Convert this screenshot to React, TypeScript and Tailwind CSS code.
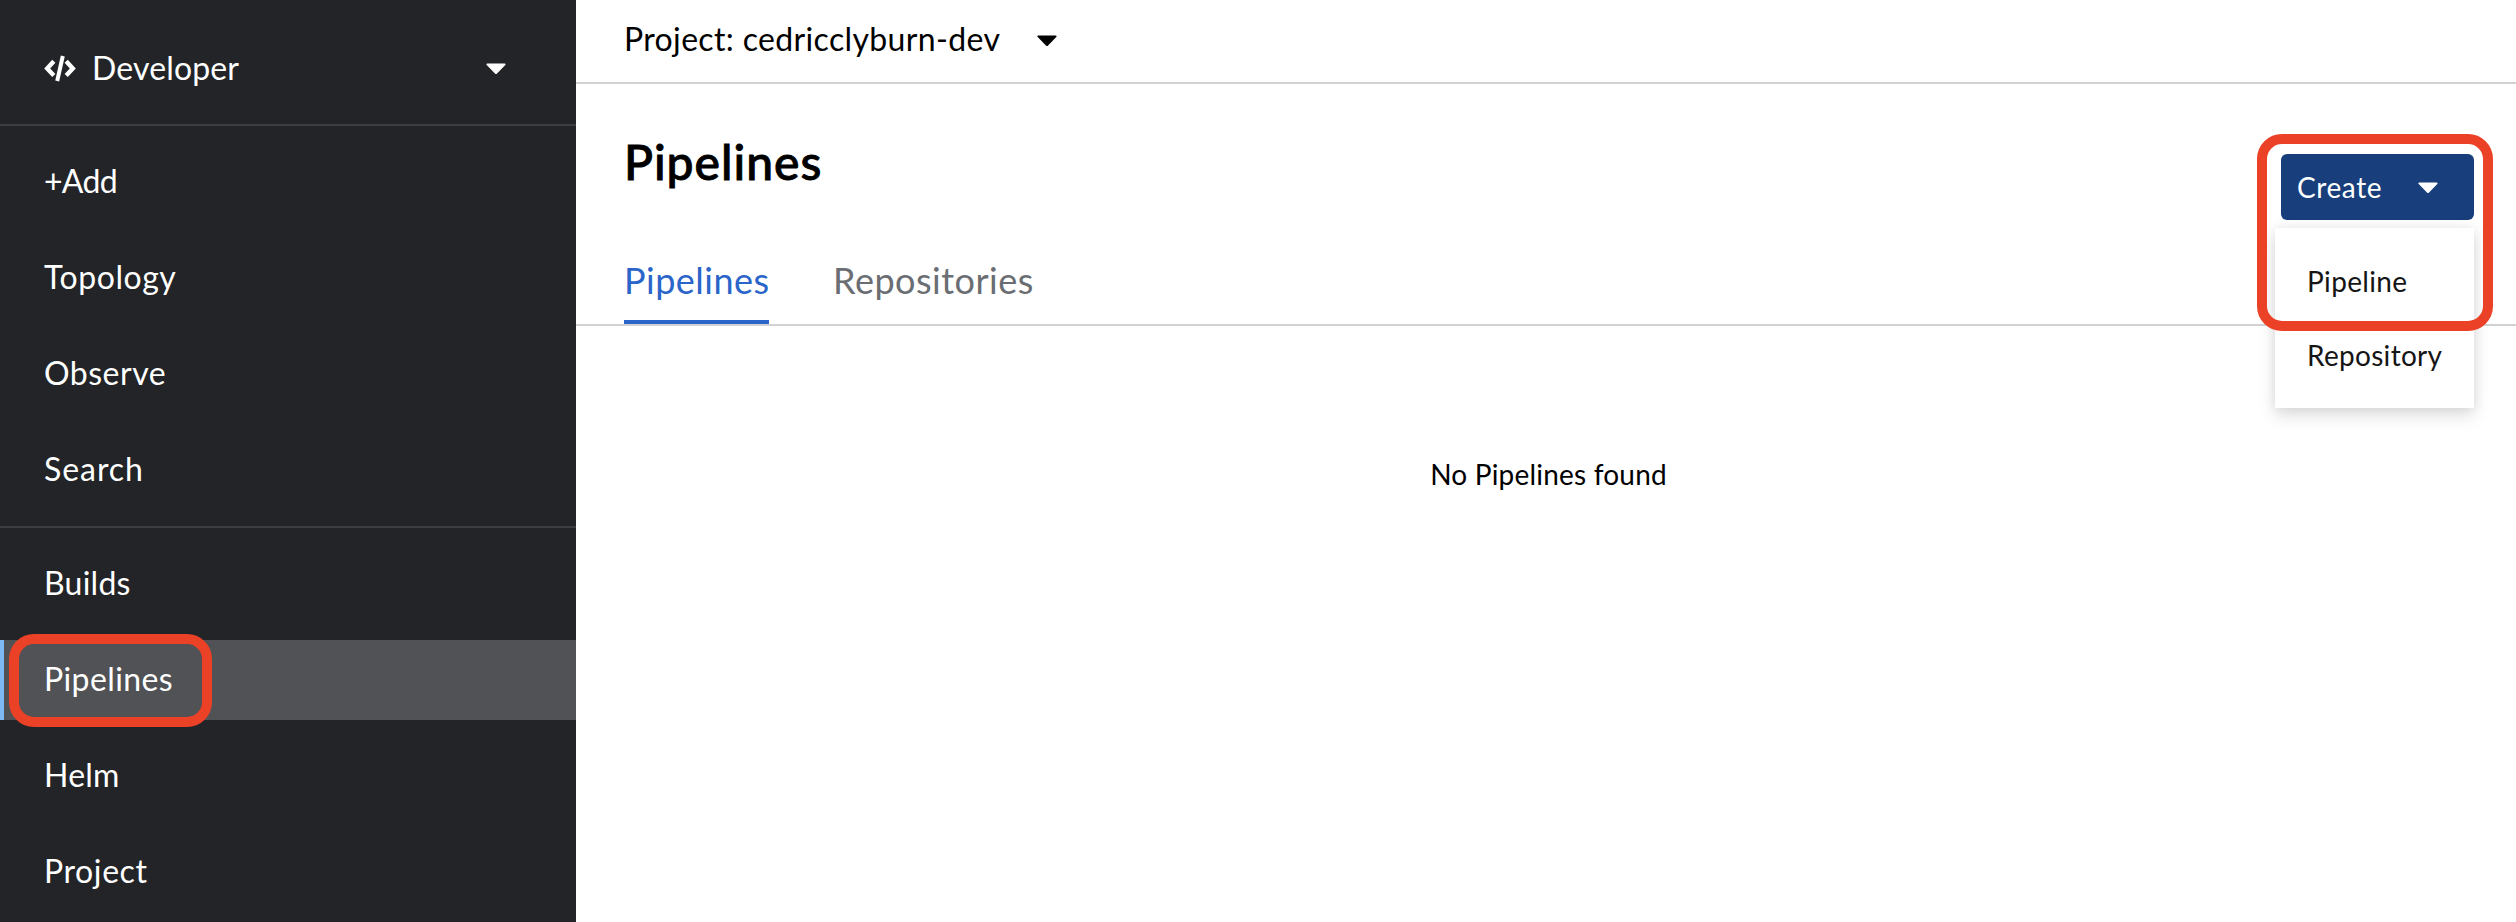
type NavEntry = { label: string; tracking: string; active?: boolean };

const primaryNav: NavEntry[] = [
  { label: '+Add', tracking: 'tracking-[-0.7px]' },
  { label: 'Topology', tracking: 'tracking-[0.55px]' },
  { label: 'Observe', tracking: 'tracking-[0.5px]' },
  { label: 'Search', tracking: 'tracking-[0.95px]' },
];

const secondaryNav: NavEntry[] = [
  { label: 'Builds', tracking: 'tracking-[0.25px]' },
  { label: 'Pipelines', tracking: 'tracking-[0.4px]', active: true },
  { label: 'Helm', tracking: 'tracking-[0.2px]' },
  { label: 'Project', tracking: 'tracking-[0.6px]' },
];

function Caret({ className = '' }: { className?: string }) {
  return (
    <svg viewBox="0 0 20 12" className={`h-3 w-5 shrink-0 ${className}`} fill="currentColor">
      <path d="M1.3 0.5h17.4c.9 0 1.2.9.6 1.5l-8.5 8.7c-.5.5-1.1.5-1.6 0L.7 2C.1 1.4.4.5 1.3.5z" />
    </svg>
  );
}

function CodeIcon() {
  return (
    <svg viewBox="0 0 32 27" className="h-[27px] w-8 shrink-0" fill="none" stroke="currentColor" strokeWidth="4.4">
      <path d="M9.8 6.2 3.2 13.4 9.8 20.4" />
      <path d="M22.2 6.2 28.8 13.4 22.2 20.4" />
      <path d="M18.8 1 13.2 26" strokeWidth="4" />
    </svg>
  );
}

function NavItem({ label, tracking, active }: NavEntry) {
  return (
    <li className={`relative flex h-20 shrink-0 items-center pb-0.5 pl-11 ${active ? 'bg-[#505255]' : ''}`}>
      {active && <span className="absolute top-0 left-0 h-full w-1 bg-[#7fb9f5]" />}
      <span className={tracking}>{label}</span>
      {active && (
        <span className="absolute top-[-6px] left-[9px] h-[93px] w-[203px] rounded-[25px] border-10 border-[#eb4126]" />
      )}
    </li>
  );
}

function NavSection({ items }: { items: NavEntry[] }) {
  return (
    <ul className="flex flex-col gap-4 border-t-2 border-[#3c3e42] py-4">
      {items.map((item) => (
        <NavItem key={item.label} {...item} />
      ))}
    </ul>
  );
}

export default function App() {
  return (
    <div className="flex h-[922px] w-[2516px] overflow-hidden bg-white font-[Lato,sans-serif] text-[32px] leading-10 text-black">
      <aside className="flex w-[576px] shrink-0 flex-col bg-[#222428] text-white">
        <div className="flex h-[124px] shrink-0 items-center pt-3 pr-[70px] pl-11">
          <CodeIcon />
          <span className="ml-4 tracking-[0.15px]">Developer</span>
          <Caret className="mt-0.5 ml-auto" />
        </div>
        <NavSection items={primaryNav} />
        <NavSection items={secondaryNav} />
      </aside>

      <main className="flex min-w-0 flex-1 flex-col">
        <div className="flex h-[84px] shrink-0 items-center border-b-2 border-[#d2d2d2] pb-1 pl-12">
          <span className="tracking-[0.35px]">Project: cedricclyburn-dev</span>
          <Caret className="mt-[3px] ml-[37px]" />
        </div>

        <header className="flex h-[150px] shrink-0 justify-between pr-[42px] pl-12">
          <h1 className="mt-[49px] text-5xl leading-[58px] font-medium tracking-[1px] [-webkit-text-stroke:0.9px_black]">Pipelines</h1>
          <div className="relative mt-[70px] h-[66px] w-[193px]">
            <button className="flex h-full w-full items-center rounded-md bg-[#183f7b] pl-4 text-[28px] text-white">
              <span className="tracking-[0.6px]">Create</span>
              <Caret className="mt-px ml-9" />
            </button>
            <ul className="absolute top-[74px] right-0 flex h-[180px] w-[199px] flex-col bg-white py-4 text-[28px] text-[#151515] shadow-[0_8px_16px_rgba(3,3,3,0.12),0_0_12px_rgba(3,3,3,0.08)]">
              <li className="flex h-[74px] items-center pb-px pl-8 tracking-[0.35px]">Pipeline</li>
              <li className="flex h-[74px] items-center pb-px pl-8 tracking-[0.3px]">Repository</li>
            </ul>
            <div className="absolute top-[-20px] right-[-19px] h-[197px] w-[236px] rounded-[25px] border-10 border-[#eb4126]" />
          </div>
        </header>

        <nav className="flex h-[92px] shrink-0 gap-16 border-b-2 border-[#d2d2d2] pl-12 text-[36px]">
          <span className="w-[145px] border-b-4 border-[#2b65c9] pt-[26px] tracking-[0.5px] text-[#2b65c9]">Pipelines</span>
          <span className="pt-[26px] tracking-[0.5px] text-[#6a6e73]">Repositories</span>
        </nav>

        <div className="flex justify-center pt-[128px] pl-[5px] text-[28px] tracking-[0.2px]">No Pipelines found</div>
      </main>
    </div>
  );
}
